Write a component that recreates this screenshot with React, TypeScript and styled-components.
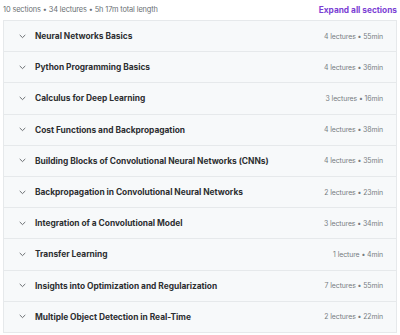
import styled, { createGlobalStyle } from "styled-components";

const GlobalStyle = createGlobalStyle`
  html, body {
    margin: 0;
    padding: 0;
    background: #ffffff;
  }
  body {
    font-family: Inter, "Noto Sans", sans-serif;
    color: #2d2f31;
  }
`;

const SECTIONS = [
  { title: "Neural Networks Basics", lectures: 4, length: "55min" },
  { title: "Python Programming Basics", lectures: 4, length: "36min" },
  { title: "Calculus for Deep Learning", lectures: 3, length: "16min" },
  { title: "Cost Functions and Backpropagation", lectures: 4, length: "38min" },
  {
    title: "Building Blocks of Convolutional Neural Networks (CNNs)",
    lectures: 4,
    length: "35min",
  },
  {
    title: "Backpropagation in Convolutional Neural Networks",
    lectures: 2,
    length: "23min",
  },
  { title: "Integration of a Convolutional Model", lectures: 3, length: "34min" },
  { title: "Transfer Learning", lectures: 1, length: "4min" },
  {
    title: "Insights into Optimization and Regularization",
    lectures: 7,
    length: "55min",
  },
  {
    title: "Multiple Object Detection in Real-Time",
    lectures: 2,
    length: "22min",
  },
];

const Chevron = () => (
  <svg width="7" height="5" viewBox="0 0 7 5" fill="none">
    <path
      d="M1 1.2 L3.5 3.6 L6 1.2"
      stroke="#5c6064"
      strokeWidth="0.9"
      strokeLinecap="round"
      strokeLinejoin="round"
    />
  </svg>
);

const CourseContent = () => {
  return (
    <Wrapper>
      <GlobalStyle />
      <Header>
        <Summary>10 sections • 34 lectures • 5h 17m total length</Summary>
        <ExpandAll>Expand all sections</ExpandAll>
      </Header>
      <List>
        {SECTIONS.map((section) => (
          <Row key={section.title}>
            <IconCell>
              <Chevron />
            </IconCell>
            <Title>{section.title}</Title>
            <Meta>
              {section.lectures} {section.lectures === 1 ? "lecture" : "lectures"} •{" "}
              {section.length}
            </Meta>
          </Row>
        ))}
      </List>
    </Wrapper>
  );
};

export default CourseContent;

const Wrapper = styled.div`
  width: 394px;
  padding: 3px 3px 0 3px;
`;

const Header = styled.div`
  display: flex;
  align-items: center;
  justify-content: space-between;
  height: 13px;
  margin-bottom: 4px;
`;

const Summary = styled.span`
  font-size: 7.4px;
  color: #6a6f73;
  letter-spacing: -0.12px;
`;

const ExpandAll = styled.span`
  font-size: 8.3px;
  font-weight: 700;
  color: #7b3fd4;
`;

const List = styled.div`
  border: 1px solid #e6e9eb;
  background: #f7f9fa;
`;

const Row = styled.div`
  display: flex;
  align-items: center;
  height: 30.2px;
  padding: 0 13px 0 0;
  border-bottom: 1px solid #e6e9eb;

  &:last-child {
    border-bottom: none;
  }
`;

const IconCell = styled.div`
  width: 31px;
  display: flex;
  justify-content: center;
  padding-left: 6px;
  box-sizing: border-box;
`;

const Title = styled.div`
  flex: 1;
  font-size: 8.4px;
  font-weight: 700;
  color: #2d2f31;
  white-space: nowrap;
  letter-spacing: -0.02px;
`;

const Meta = styled.div`
  font-size: 6.9px;
  color: #767b7f;
  white-space: nowrap;
  letter-spacing: -0.08px;
`;
